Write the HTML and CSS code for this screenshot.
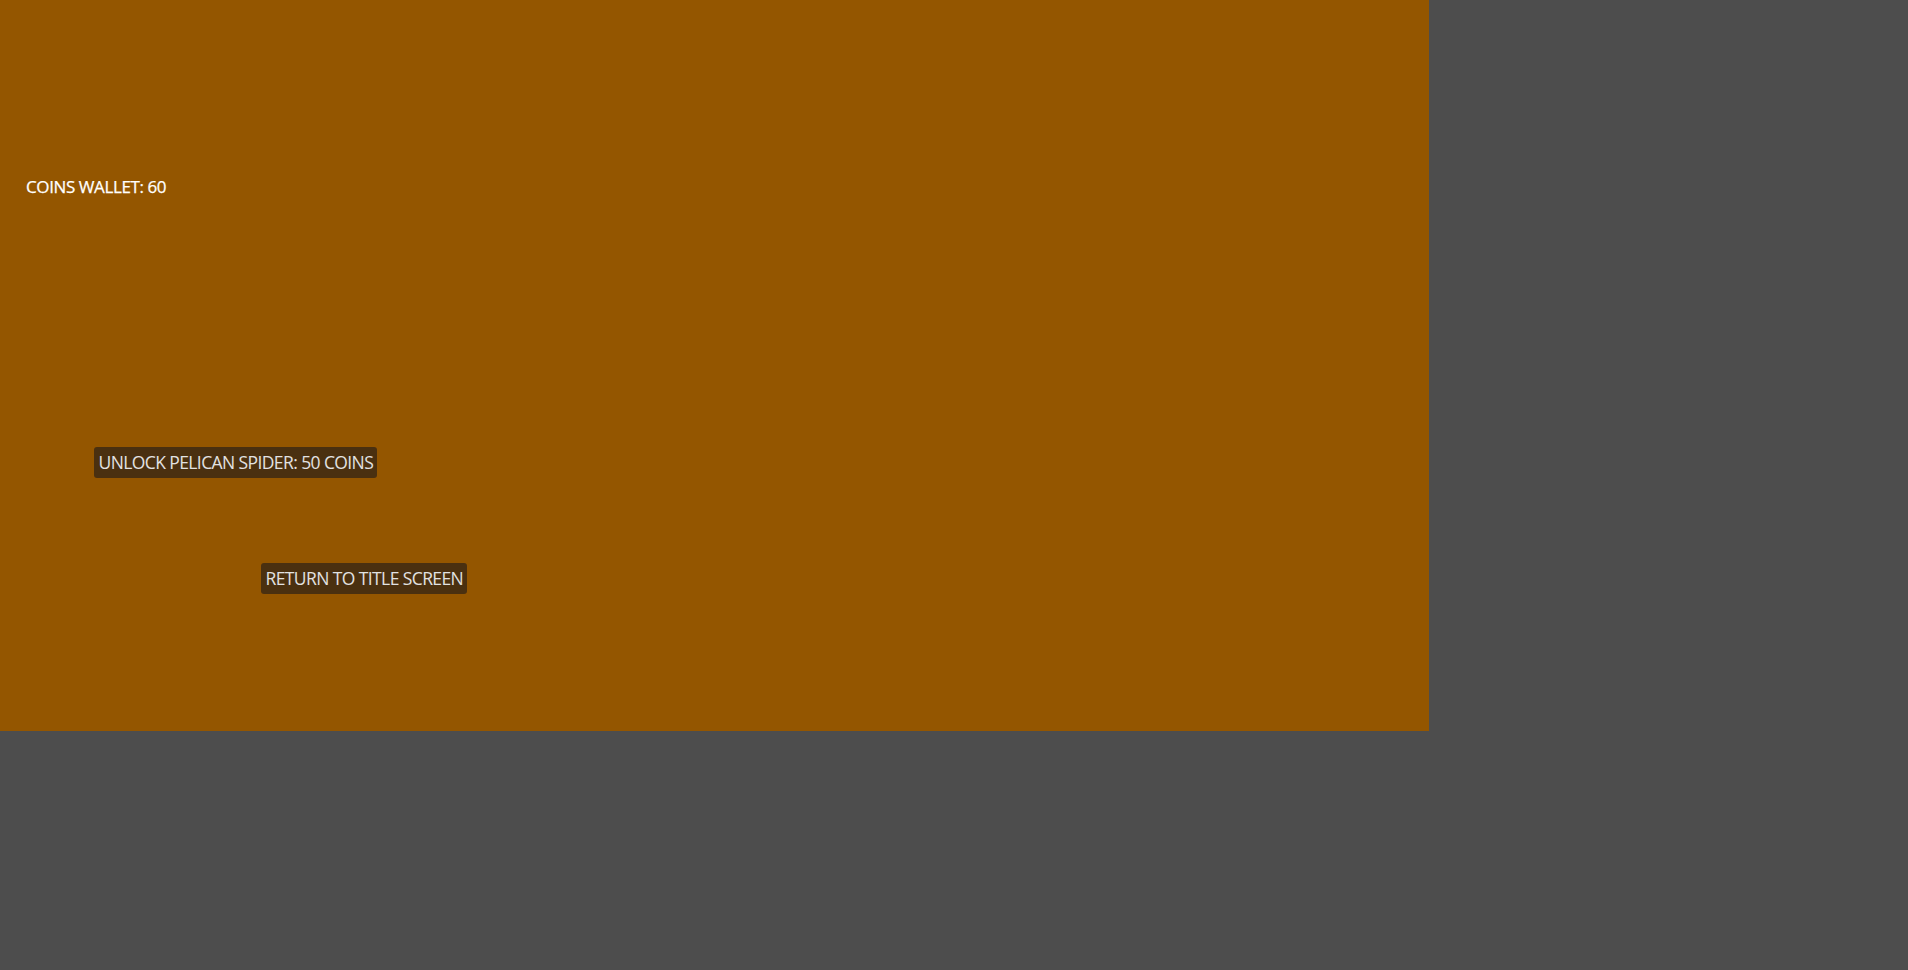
FILE: index.html
```html
<!DOCTYPE html>
<html>
<head>
<meta charset="utf-8">
<link rel="stylesheet" href="styles.css">
</head>
<body>
<main class="stage">
  <div class="wallet">COINS WALLET: 60</div>
  <button class="btn btn-unlock">UNLOCK PELICAN SPIDER: 50 COINS</button>
  <button class="btn btn-return">RETURN TO TITLE SCREEN</button>
</main>
</body>
</html>
```
FILE: styles.css
```css
html, body {
  margin: 0;
  padding: 0;
  background: #4d4d4d;
  width: 1908px;
  height: 970px;
  overflow: hidden;
}
.stage {
  width: 1429px;
  height: 731px;
  background: #945600;
  display: flex;
  flex-direction: column;
  align-items: flex-start;
  font-family: "Open Sans", "Noto Sans", sans-serif;
  font-weight: 400;
}
.wallet {
  color: #ffffff;
  font-size: 17px;
  letter-spacing: -0.4px;
  -webkit-text-stroke: 0.25px #ffffff;
  margin-top: 174px;
  margin-left: 26px;
  line-height: 26px;
}
.btn {
  font-family: inherit;
  font-weight: 400;
  font-size: 17.5px;
  letter-spacing: -0.6px;
  color: #e2e2e2;
  background: #4a3010;
  border: none;
  border-radius: 3px;
  height: 31px;
  line-height: 31px;
  padding: 0 4px 0 4.5px;
  white-space: nowrap;
}
.btn-unlock {
  margin-top: 247px;
  margin-left: 94px;
}
.btn-return {
  margin-top: 85px;
  margin-left: 261px;
}
```
